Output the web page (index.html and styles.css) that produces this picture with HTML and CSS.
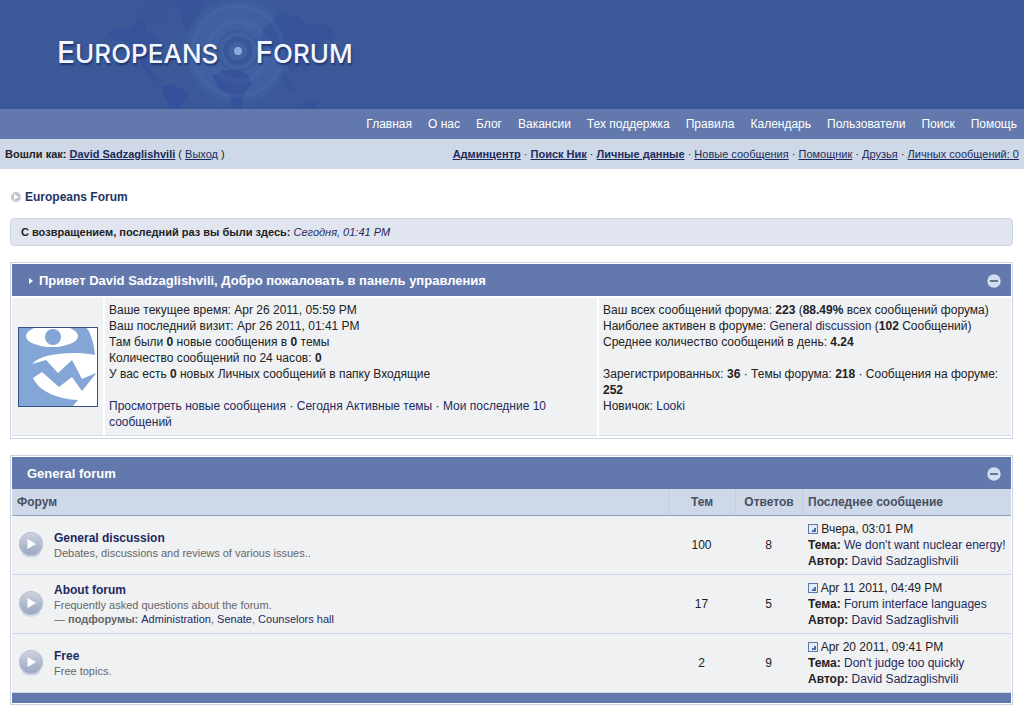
FILE: index.html
```html
<!DOCTYPE html>
<html lang="ru">
<head>
<meta charset="utf-8">
<title>Europeans Forum</title>
<link rel="stylesheet" href="styles.css">
</head>
<body>
<header class="banner">
  <svg class="map" viewBox="95 0 260 109" width="260" height="109" aria-hidden="true">
    <defs>
      <radialGradient id="glow"><stop offset="0" stop-color="#4467aa"/><stop offset=".8" stop-color="#4467aa" stop-opacity=".8"/><stop offset="1" stop-color="#4467aa" stop-opacity="0"/></radialGradient>
    </defs>
    <circle cx="238" cy="51" r="56" fill="url(#glow)" opacity=".6"/>
    <g fill="#34509a">
      <path d="M108 32l8-5 14 3 7-9 8 1 3 10 9 4 6 9-7 5-3 8-5 7 4 6 6 7 5 3-5 1-9-5-7-12-5-10-6-9-9-6-6 1z" opacity=".7"/>
      <path d="M163 87l8-3 9 4 8 5-4 8-4 8h-10l-4-10-4-5z"/>
      <path d="M134 18l9-10 12-6 18 0-7 8 1 9-9 3-5-6-8 6z" opacity=".3"/>
      <path d="M174 0h30l-3 12-8 8-4 13-7-9-2-12z" opacity=".7"/>
      <path d="M213 76l9-6 16 0 11 5 3 9-7 8-4 17h-9l-3-14-11-7z" opacity=".8"/>
      <path d="M262 30l14-13 8-4 3 5 10-3 9 9 20 0 10 10-5 6-8 0-4 11-9 7-3 13-8-6-7 8-7-11-10-5-6-11-9-2z" opacity=".65"/>
      <path d="M297 106l8-5 10 1 4 7h-23z" opacity=".7"/>
      <path d="M283 70l5 5 6 16-5-1-7-11z" opacity=".5"/>
    </g>
    <g fill="none">
      <circle cx="238" cy="51" r="20" stroke="#2e4a90" stroke-width="2" opacity=".3"/>
      <circle cx="238" cy="51" r="12" stroke="#2e4a90" stroke-width="5" opacity=".45"/>
      <circle cx="238" cy="51" r="30" stroke="#5574b4" stroke-width="5" opacity=".2"/>
      <circle cx="238" cy="51" r="45" stroke="#5574b4" stroke-width="4" opacity=".2"/>
    </g>
    <circle cx="238" cy="51" r="4" fill="#8ea8d8"/>
  </svg>
  <h1 class="logo"><span>E<small>UROPEANS</small></span><span>F<small>ORUM</small></span></h1>
</header>
<nav class="menu">
  <a href="#">Главная</a><a href="#">О нас</a><a href="#">Блог</a><a href="#">Вакансии</a><a href="#">Тех поддержка</a><a href="#">Правила</a><a href="#">Календарь</a><a href="#">Пользователи</a><a href="#">Поиск</a><a href="#">Помощь</a>
</nav>
<div class="userbar">
  <p><b>Вошли как: <a href="#">David Sadzaglishvili</a></b> ( <a href="#">Выход</a> )</p>
  <p><b><a href="#">Админцентр</a></b> · <b><a href="#">Поиск Ник</a></b> · <b><a href="#">Личные данные</a></b> · <a href="#">Новые сообщения</a> · <a href="#">Помощник</a> · <a href="#">Друзья</a> · <a href="#">Личных сообщений: 0</a></p>
</div>
<main class="page">
  <div class="crumbs">
    <svg width="12" height="12" viewBox="0 0 12 12" aria-hidden="true"><circle cx="6" cy="6" r="5" fill="#b5bccb"/><circle cx="6" cy="6" r="4" fill="none" stroke="#d0d5df"/><path d="M4 3l5 3-5 3z" fill="#fff"/></svg>
    <a href="#">Europeans Forum</a>
  </div>
  <p class="notice">С возвращением, последний раз вы были здесь: <a href="#">Сегодня, 01:41 PM</a></p>

  <section class="box">
    <div class="title welcome">
      <h2><svg width="4" height="6" viewBox="0 0 4 6" aria-hidden="true"><path d="M0 0l4 3-4 3z" fill="#fff"/></svg>Привет David Sadzaglishvili, Добро пожаловать в панель управления</h2>
      <button class="fold" aria-label="Свернуть"><svg width="14" height="14" viewBox="0 0 14 14"><circle cx="7" cy="7" r="6.7" fill="#d1ddf0"/><path d="M3 6h8v2H3z" fill="#68758f"/></svg></button>
    </div>
    <div class="panel">
      <div class="cell face">
        <svg width="80" height="80" viewBox="0 0 80 80" role="img" aria-label="Аватар">
          <rect width="80" height="80" fill="#83a6d6"/>
          <path d="M68 0C74 8 76 18 77 28C55 24 24 26 14 37L28 33 40 46 54 33 64 52 78 46 76 49 64 64 54 50 41 60 24 45 15 51C22 66 42 72 60 73L54 80H80V0z" fill="#fff"/>
          <ellipse cx="34" cy="9" rx="26" ry="11" fill="#fff"/>
          <circle cx="35" cy="10" r="8" fill="#83a6d6"/>
          <rect x=".5" y=".5" width="79" height="79" fill="none" stroke="#36507f"/>
        </svg>
      </div>
      <div class="cell mine">
        <p>Ваше текущее время: Apr 26 2011, 05:59 PM<br>Ваш последний визит: Apr 26 2011, 01:41 PM<br>Там были <b>0</b> новые сообщения в <b>0</b> темы<br>Количество сообщений по 24 часов: <b>0</b><br>У вас есть <b>0</b> новых Личных сообщений в папку Входящие</p>
        <p><a href="#">Просмотреть новые сообщения</a> · <a href="#">Сегодня Активные темы</a> · <a href="#">Мои последние 10 сообщений</a></p>
      </div>
      <div class="cell stats">
        <p>Ваш всех сообщений форума: <b>223</b> (<b>88.49%</b> всех сообщений форума)<br>Наиболее активен в форуме: <a href="#">General discussion</a> (<b>102</b> Сообщений)<br>Среднее количество сообщений в день: <b>4.24</b></p>
        <p>Зарегистрированных: <b>36</b> · Темы форума: <b>218</b> · Сообщения на форуме: <b>252</b><br>Новичок: <a href="#">Looki</a></p>
      </div>
    </div>
  </section>

  <section class="box">
    <div class="title">
      <h2>General forum</h2>
      <button class="fold" aria-label="Свернуть"><svg width="14" height="14" viewBox="0 0 14 14"><circle cx="7" cy="7" r="6.7" fill="#d1ddf0"/><path d="M3 6h8v2H3z" fill="#68758f"/></svg></button>
    </div>
    <svg class="defs" width="0" height="0" aria-hidden="true">
      <defs>
        <linearGradient id="ball" x2="0" y2="1"><stop offset="0" stop-color="#cfd4df"/><stop offset="1" stop-color="#98a6c2"/></linearGradient>
        <symbol id="play" viewBox="0 0 26 28"><ellipse cx="13" cy="22" rx="9" ry="5" fill="#c5cddd" opacity=".6"/><circle cx="13" cy="13" r="12" fill="url(#ball)"/><circle cx="13" cy="13" r="11.5" fill="none" stroke="#bcc4d2"/><path d="M9.500 8l8.500 5-8.500 5z" fill="#fff"/></symbol>
        <symbol id="last" viewBox="0 0 10 10"><path d="M0 0h10v10H0z" fill="#5a78ae"/><path d="M1 1h8v8H1z" fill="#e4ecf7"/><path d="M6 4h2v4H4V6h2z" fill="#4d6ba5"/></symbol>
      </defs>
    </svg>
    <table class="forums">
      <colgroup><col class="c-state"><col><col class="c-num"><col class="c-num"><col class="c-latest"></colgroup>
      <thead>
        <tr><th class="name" colspan="2">Форум</th><th class="num">Тем</th><th class="num">Ответов</th><th class="latest">Последнее сообщение</th></tr>
      </thead>
      <tbody>
        <tr>
          <td class="state"><svg width="26" height="28"><use href="#play"/></svg></td>
          <td class="about"><h3><a href="#">General discussion</a></h3><p>Debates, discussions and reviews of various issues..</p></td>
          <td class="num">100</td><td class="num">8</td>
          <td class="latest"><svg width="10" height="10"><use href="#last"/></svg> Вчера, 03:01 PM<br><b>Тема:</b> <a href="#">We don't want nuclear energy!</a><br><b>Автор:</b> <a href="#">David Sadzaglishvili</a></td>
        </tr>
        <tr>
          <td class="state"><svg width="26" height="28"><use href="#play"/></svg></td>
          <td class="about"><h3><a href="#">About forum</a></h3><p>Frequently asked questions about the forum.</p><p>— <b>подфорумы:</b> <a href="#">Administration</a>, <a href="#">Senate</a>, <a href="#">Counselors hall</a></p></td>
          <td class="num">17</td><td class="num">5</td>
          <td class="latest"><svg width="10" height="10"><use href="#last"/></svg> Apr 11 2011, 04:49 PM<br><b>Тема:</b> <a href="#">Forum interface languages</a><br><b>Автор:</b> <a href="#">David Sadzaglishvili</a></td>
        </tr>
        <tr>
          <td class="state"><svg width="26" height="28"><use href="#play"/></svg></td>
          <td class="about"><h3><a href="#">Free</a></h3><p>Free topics.</p></td>
          <td class="num">2</td><td class="num">9</td>
          <td class="latest"><svg width="10" height="10"><use href="#last"/></svg> Apr 20 2011, 09:41 PM<br><b>Тема:</b> <a href="#">Don't judge too quickly</a><br><b>Автор:</b> <a href="#">David Sadzaglishvili</a></td>
        </tr>
      </tbody>
    </table>
    <div class="foot"></div>
  </section>
</main>
</body>
</html>
```
FILE: styles.css
```css
* { box-sizing: border-box; }
body, h1, h2, h3, p { margin: 0; }
body {
  background: #fff;
  color: #222;
  font: 12px/16px "Liberation Sans", Arial, sans-serif;
}
a { color: #1d2a5c; text-decoration: none; }
.banner { position: relative; height: 109px; padding: 32px 57px; background: #3b5998; }
.map { position: absolute; left: 95px; top: 0; }
.logo {
  position: relative;
  display: flex;
  gap: 37px;
  color: #f2f6ff;
  font: 500 30px/40px Inter, sans-serif;
  text-shadow: 1px 2px 2px #1f356b;
}
.logo small { font-size: 26px; }
.menu {
  display: flex;
  justify-content: flex-end;
  gap: 16px;
  padding: 7px 7px;
  background: #6379ad;
}
.menu a { color: #fff; }
.userbar {
  display: flex;
  justify-content: space-between;
  padding: 7px 5px;
  background: #ced8e7;
  font-size: 11px;
}
.userbar a { text-decoration: underline; }
.page { padding: 20px 11px 0 10px; }
.crumbs { display: flex; align-items: center; gap: 3px; font-weight: bold; }
.crumbs a { color: #1b3564; }
.notice {
  margin: 13px 0 16px;
  padding: 5px 10px;
  border: 1px solid #cdd5e2;
  border-radius: 4px;
  background: #e1e5ef;
  font-size: 11px;
  font-weight: bold;
}
.notice a { font-weight: normal; font-style: italic; }
.box { margin-bottom: 16px; padding: 1px; border: 1px solid #cbd4e3; }
.title {
  display: flex;
  align-items: center;
  justify-content: space-between;
  min-height: 32px;
  padding: 2px 10px 0 15px;
  background: #6379ad;
  color: #fff;
}
.title h2 { display: flex; align-items: center; gap: 6px; font-size: 13px; line-height: 16px; }
.title.welcome { padding-left: 17px; }
.fold { display: flex; padding: 0; border: 0; background: none; }
.panel { display: grid; grid-template-columns: 91px 492fr 412fr; gap: 2px; padding: 2px 0 1px; }
.cell { padding: 4px; background: #eff1f3; border-bottom: 1px solid #d5dbe3; }
.cell p + p { margin-top: 16px; }
.face { display: flex; align-items: center; justify-content: center; }
.mine { padding-bottom: 5px; }
.defs { display: block; }
.forums { width: 100%; border-collapse: separate; border-spacing: 0; table-layout: fixed; }
.c-state { width: 37px; }
.c-num { width: 67px; }
.c-latest { width: 209px; }
.forums th {
  height: 27px;
  padding: 0 5px;
  border-bottom: 1px solid #91a0bd;
  background: #ced8e7;
  color: #46505e;
  text-align: left;
}
.forums th + th { border-left: 1px dotted #b3bfd2; }
.forums td { height: 59px; padding: 5px; background: #eff1f3; border-bottom: 1px solid #cbd5e5; }
.forums .num { padding: 0; text-align: center; }
.forums .latest { white-space: nowrap; }
.forums td.latest { padding: 5px 0 5px 6px; }
.latest svg { vertical-align: -1px; }
.forums .state { padding: 0 6px; }
.state svg { display: block; }
.about h3 { font-size: 12px; line-height: 16px; }
.about p { color: #666; font-size: 11px; line-height: 14px; }
.foot { height: 10px; background: #6379ad; }
```
